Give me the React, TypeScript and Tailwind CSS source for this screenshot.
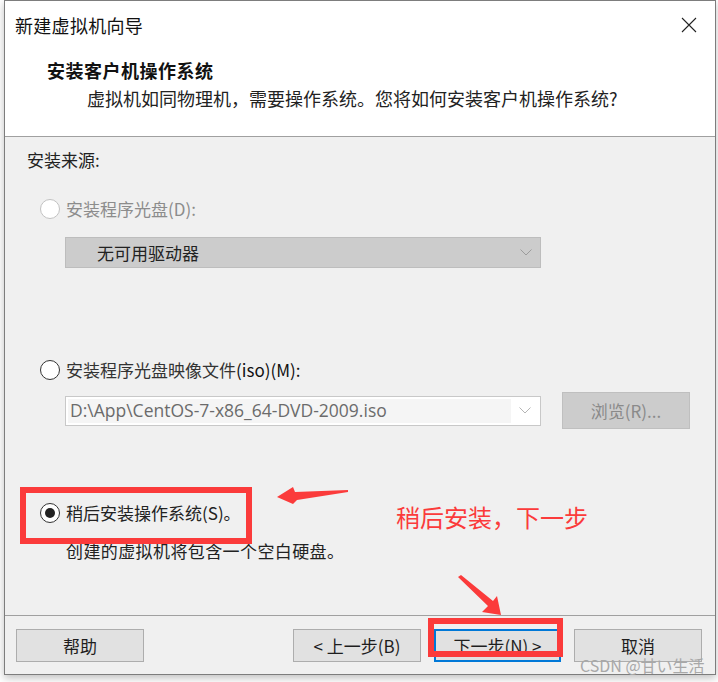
import React from 'react';

const cjk = "font-['Noto_Sans_CJK_SC','Noto_Sans',sans-serif]";

const Radio: React.FC<{ checked?: boolean; disabled?: boolean }> = ({ checked, disabled }) => (
  <span
    className={`flex h-[20px] w-[20px] shrink-0 items-center justify-center rounded-full border bg-white ${
      disabled ? 'border-[#c2c2c2]' : 'border-[#333333]'
    }`}
  >
    {checked && <span className="h-[10px] w-[10px] rounded-full bg-[#222222]" />}
  </span>
);

const Chevron: React.FC<{ color: string }> = ({ color }) => (
  <svg width="12" height="7" viewBox="0 0 12 7">
    <polyline points="0.5,0.5 6,6 11.5,0.5" fill="none" stroke={color} strokeWidth="1" />
  </svg>
);

const Btn: React.FC<{ children: React.ReactNode; focus?: boolean; w: string }> = ({ children, focus, w }) => (
  <div
    className={`flex h-[33px] ${w} items-center justify-center bg-[#e1e1e1] text-[17px] leading-[18px] text-[#1e1e1e] ${
      focus ? 'border-2 border-[#0078d7]' : 'border border-[#adadad]'
    }`}
  >
    <span className="leading-[18px]">{children}</span>
  </div>
);

export default function App() {
  return (
    <div className={`relative h-[682px] w-[718px] overflow-hidden bg-white ${cjk}`}>
      {/* dialog window */}
      <div className="ml-[4px] flex h-[675px] w-[712px] flex-col border border-[#7d7d7d] bg-[#f0f0f0] shadow-[0_3px_8px_rgba(0,0,0,0.25)]">
        {/* title + header */}
        <div className="h-[135px] bg-white">
          <div className="flex h-[48px] items-center justify-between pl-[10px] pr-[18px]">
            <span className="text-[18px] leading-none tracking-[0.3px] text-[#111111]">新建虚拟机向导</span>
            <svg width="16" height="16" viewBox="0 0 16 16">
              <path d="M1 1 L15 15 M15 1 L1 15" stroke="#222" strokeWidth="1.1" />
            </svg>
          </div>
          <div className="pl-[42px] pt-[9px]">
            <div className="h-[24px] text-[18px] font-bold leading-[24px] tracking-[0.5px] text-[#111111]">安装客户机操作系统</div>
            <div className="mt-[4px] h-[24px] pl-[40px] text-[18px] leading-[24px] text-[#222222]">
              虚拟机如同物理机，需要操作系统。您将如何安装客户机操作系统?
            </div>
          </div>
        </div>
        <div className="h-px bg-[#a0a0a0]" />

        {/* content */}
        <div className="flex h-[478px] flex-col pl-[22px] text-[17px] text-[#222222]">
          <div className="mt-[11px] h-[24px] leading-[24px]">安装来源:</div>

          <div className="mt-[25px] flex h-[24px] items-center gap-[6px] pl-[13px] text-[#8c8c8c]">
            <Radio disabled />
            <span className="leading-[24px]">安装程序光盘(D):</span>
          </div>
          <div className="ml-[38px] mt-[16px] flex h-[31px] w-[476px] items-center justify-between border border-[#bdbdbd] bg-[#cccccc] pl-[31px] pr-[8px]">
            <span className="leading-none text-[#222222]">无可用驱动器</span>
            <Chevron color="#9c9c9c" />
          </div>

          <div className="mt-[90px] flex h-[24px] items-center gap-[6px] pl-[13px]">
            <Radio />
            <span className="leading-[24px] text-[#333333]">
              安装程序光盘映像文件<span className="text-[#111111]">(iso)(M):</span>
            </span>
          </div>
          <div className="mt-[10px] flex h-[37px] items-center">
            <div className="ml-[38px] flex h-[30px] w-[476px] items-center border border-[#c8c8c8] bg-white p-[2px]">
              <div className="flex h-full w-[443px] items-center bg-[#f5f5f5] pl-[2px] font-['Open_Sans',sans-serif] text-[17.5px] text-[#6b6b6b]">
                D:\App\CentOS-7-x86_64-DVD-2009.iso
              </div>
              <div className="flex flex-1 items-center justify-center">
                <Chevron color="#b5b5b5" />
              </div>
            </div>
            <div className="ml-[21px] flex h-[37px] w-[128px] items-center justify-center border border-[#bfbfbf] bg-[#cccccc] text-[#8a8a8a]">
              浏览(R)...
            </div>
          </div>

          <div className="mt-[72px] flex h-[24px] items-center gap-[6px] pl-[13px]">
            <Radio checked />
            <span className="leading-[24px]">稍后安装操作系统(S)。</span>
          </div>
          <div className="mt-[14px] h-[24px] pl-[39px] leading-[24px] tracking-[0.4px]">创建的虚拟机将包含一个空白硬盘。</div>
        </div>
        <div className="h-px bg-[#a0a0a0]" />

        {/* footer */}
        <div className="flex flex-1 items-start pl-[11px] pr-[13px] pt-[13px]">
          <Btn w="w-[128px]">帮助</Btn>
          <div className="ml-auto flex gap-[13px]">
            <Btn w="w-[128px]">&lt; 上一步(B)</Btn>
            <Btn w="w-[127px]" focus>下一步(N) &gt;</Btn>
            <Btn w="w-[128px]">取消</Btn>
          </div>
        </div>
      </div>

      {/* annotations */}
      <div className="absolute left-[20px] top-[487px] h-[57px] w-[232px] border-[6px] border-[#fb3b3b]" />
      <div className="absolute left-[428px] top-[618px] h-[39px] w-[135px] border-[6px] border-[#fb3b3b]" />
      <div className="absolute left-[396px] top-[503px] text-[24px] leading-[28px] text-[#fb3b3b]">稍后安装，下一步</div>
      <svg className="absolute left-0 top-0" width="718" height="682" viewBox="0 0 718 682">
        <polygon points="277,497 293,487 295,492 348,490 348,492 297,500 293,504" fill="#fb3b3b" />
        <polygon points="458,577 461,575 493,601 497,596 501,615 482,612 488,606" fill="#fb3b3b" />
      </svg>
      <div className="absolute left-[580px] top-[657px] text-[16px] leading-[17px] text-[#a8a8a8]">CSDN @甘い生活</div>
    </div>
  );
}
